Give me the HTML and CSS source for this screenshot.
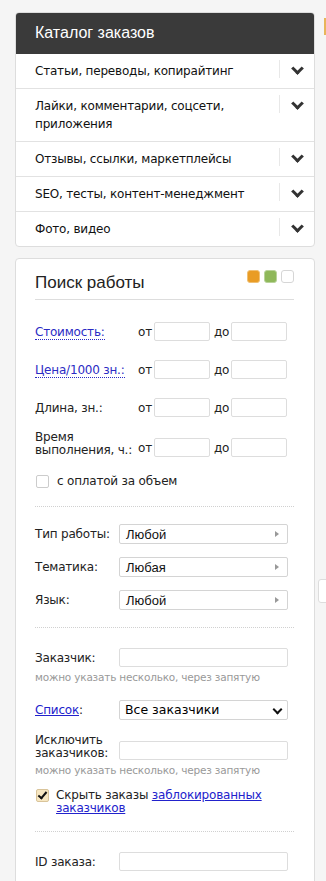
FILE: index.html
```html
<!DOCTYPE html>
<html lang="ru">
<head>
  <meta charset="UTF-8">
  <meta name="viewport" content="width=device-width, initial-scale=1.0">
  <title>Каталог заказов</title>
  <link rel="stylesheet" href="styles.css">
</head>
<body>
  <div class="side-strip"></div>
  <div class="side-tab"></div>

  <div class="sidebar">
    <div class="catalog">
      <div class="catalog-head">Каталог заказов</div>
      <div class="cat-row"><div class="cat-name">Статьи, переводы, копирайтинг</div><div class="cat-toggle"><span class="chev"></span></div></div>
      <div class="cat-row"><div class="cat-name">Лайки, комментарии, соцсети, приложения</div><div class="cat-toggle"><span class="chev"></span></div></div>
      <div class="cat-row"><div class="cat-name">Отзывы, ссылки, маркетплейсы</div><div class="cat-toggle"><span class="chev"></span></div></div>
      <div class="cat-row"><div class="cat-name">SEO, тесты, контент-менеджмент</div><div class="cat-toggle"><span class="chev"></span></div></div>
      <div class="cat-row"><div class="cat-name">Фото, видео</div><div class="cat-toggle"><span class="chev"></span></div></div>
    </div>

    <div class="search">
      <div class="search-head">
        <span class="search-title">Поиск работы</span>
        <span class="swatches">
          <span class="sw sw-orange"></span>
          <span class="sw sw-green"></span>
          <span class="sw sw-white"></span>
        </span>
      </div>

      <div class="range-row">
        <span class="r-label"><a href="#" class="dotted">Стоимость:</a></span>
        <span class="r-from">от</span><input type="text" class="r-input">
        <span class="r-to">до</span><input type="text" class="r-input">
      </div>
      <div class="range-row">
        <span class="r-label"><a href="#" class="dotted">Цена/1000 зн.:</a></span>
        <span class="r-from">от</span><input type="text" class="r-input">
        <span class="r-to">до</span><input type="text" class="r-input">
      </div>
      <div class="range-row">
        <span class="r-label">Длина, зн.:</span>
        <span class="r-from">от</span><input type="text" class="r-input">
        <span class="r-to">до</span><input type="text" class="r-input">
      </div>
      <div class="range-row range-tall">
        <span class="r-label">Время выполнения, ч.:</span>
        <span class="r-from">от</span><input type="text" class="r-input">
        <span class="r-to">до</span><input type="text" class="r-input">
      </div>

      <label class="check-row"><span class="box"></span>с оплатой за объем</label>

      <div class="sep"></div>

      <div class="field-row pick-first">
        <span class="f-label">Тип работы:</span>
        <div class="picker">Любой<span class="tri"></span></div>
      </div>
      <div class="field-row">
        <span class="f-label">Тематика:</span>
        <div class="picker">Любая<span class="tri"></span></div>
      </div>
      <div class="field-row">
        <span class="f-label">Язык:</span>
        <div class="picker">Любой<span class="tri"></span></div>
      </div>

      <div class="sep sep-tight"></div>

      <div class="field-row first">
        <span class="f-label">Заказчик:</span>
        <input type="text" class="f-input">
      </div>
      <div class="hint">можно указать несколько, через запятую</div>

      <div class="field-row list-row">
        <span class="f-label"><a href="#" class="plain">Список</a>:</span>
        <div class="dropdown">Все заказчики<span class="chev small"></span></div>
      </div>

      <div class="field-row tall-row">
        <span class="f-label">Исключить заказчиков:</span>
        <input type="text" class="f-input">
      </div>
      <div class="hint">можно указать несколько, через запятую</div>

      <label class="check-row checked-row"><span class="box checked"></span><span>Скрыть заказы <a href="#" class="plain">заблокированных заказчиков</a></span></label>

      <div class="sep sep-after-check"></div>

      <div class="field-row id-row">
        <span class="f-label">ID заказа:</span>
        <input type="text" class="f-input">
      </div>
    </div>
  </div>
</body>
</html>
```

FILE: styles.css
```css
/* page */
body {
  margin: 0;
  padding: 0;
  background-color: #f5f5f5;
  font-family: Tahoma, "DejaVu Sans", Verdana, sans-serif;
  color: #222;
  overflow: hidden;
}

.sidebar {
  width: 300px;
  padding: 12px 0 0 15px;
}

/* bits of the next column peeking in */
.side-strip {
  position: absolute;
  left: 324px;
  top: 18px;
  width: 2px;
  height: 17px;
  background-color: #e8b55a;
}

.side-tab {
  position: absolute;
  left: 318px;
  top: 579px;
  width: 12px;
  height: 22px;
  border: 1px solid #ddd;
  border-radius: 3px;
  background-color: #fff;
}

/* catalog */
.catalog {
  background-color: #fff;
  border: 1px solid #ddd;
  border-radius: 4px;
  overflow: hidden;
}

.catalog-head {
  background-color: #3a3a3a;
  color: #fff;
  font-family: "Liberation Sans", Arial, sans-serif;
  font-size: 16px;
  height: 41px;
  line-height: 40px;
  padding-left: 19px;
}

.cat-row {
  display: flex;
  border-top: 1px solid #e2e2e2;
}

.cat-row:nth-child(2) {
  border-top: none;
}

.cat-name {
  flex: 1;
  font-size: 12px;
  letter-spacing: -0.2px;
  line-height: 18px;
  padding: 8px 8px 8px 19px;
  color: #111;
}

.cat-toggle {
  width: 34px;
  margin: 6px 0;
  border-left: 1px solid #e8e8e8;
  display: flex;
  justify-content: center;
  padding-top: 4px;
  height: 14px;
}

.chev {
  display: inline-block;
  width: 6px;
  height: 6px;
  border-right: 3px solid #333;
  border-bottom: 3px solid #333;
  transform: rotate(45deg);
}

.chev.small {
  width: 5px;
  height: 5px;
  border-width: 2.5px;
  border-color: #111;
}

/* search */
.search {
  margin-top: 11px;
  background-color: #fff;
  border: 1px solid #ddd;
  border-radius: 4px;
  padding: 0 20px 20px 19px;
  height: 640px;
}

.search-head {
  display: flex;
  justify-content: space-between;
  align-items: center;
  height: 40px;
  border-bottom: 1px solid #ddd;
}

.search-title {
  font-family: "Liberation Sans", Arial, sans-serif;
  font-size: 17px;
  color: #222;
  padding-top: 7px;
}

.swatches {
  display: flex;
  gap: 4px;
  margin-top: -6px;
}

.sw {
  width: 11px;
  height: 11px;
  border-radius: 3px;
  border: 1px solid transparent;
}

.sw-orange { background-color: #e99c25; border-color: #f0c074; }
.sw-green { background-color: #8fb85a; border-color: #b8d39a; }
.sw-white { background-color: #fff; border-color: #d6d6d6; }

a.dotted {
  color: #2b2bc4;
  text-decoration: none;
  border-bottom: 1px dotted #2b2bc4;
}

a.plain {
  color: #2222cc;
  text-decoration: underline;
}

.range-row {
  display: flex;
  align-items: center;
  font-size: 12px;
  letter-spacing: -0.2px;
  margin-top: 22px;
  height: 19px;
}

.range-row + .range-row {
  margin-top: 19px;
}

.range-row.range-tall {
  margin-top: 14px;
  height: 26px;
  align-items: flex-end;
}

.range-tall .r-label {
  line-height: 13px;
}

.range-tall .r-from,
.range-tall .r-to {
  padding-bottom: 2px;
}

.r-label {
  width: 103px;
  flex-shrink: 0;
  color: #222;
}

.r-from {
  width: 16px;
}

.r-to {
  width: 17px;
  padding-left: 4px;
}

.r-input {
  box-sizing: border-box;
  width: 56px;
  height: 19px;
  border: 1px solid #ddd;
  border-radius: 2px;
  margin: 0;
  padding: 0 3px;
}

.check-row {
  display: flex;
  align-items: flex-start;
  gap: 8px;
  font-size: 12px;
  letter-spacing: -0.2px;
  margin-top: 18px;
  line-height: 13px;
  color: #222;
}

.box {
  flex-shrink: 0;
  box-sizing: border-box;
  width: 13px;
  height: 13px;
  border: 1px solid #ccc;
  border-radius: 2px;
  background-color: #fff;
  margin-left: 1px;
  position: relative;
}

.box.checked {
  background-color: #f7e7c2;
  border-color: #d9c49a;
}

.box.checked::after {
  content: "";
  position: absolute;
  left: 3px;
  top: 0;
  width: 3px;
  height: 7px;
  border-right: 2px solid #111;
  border-bottom: 2px solid #111;
  transform: rotate(40deg);
}

.checked-row {
  margin-top: 13px;
  gap: 7px;
}

.sep {
  border-top: 1px dotted #d0d0d0;
  margin-top: 18px;
}

.sep-tight {
  margin-top: 17px;
}

.sep-after-check {
  margin-top: 16px;
}

.field-row {
  display: flex;
  align-items: center;
  font-size: 12px;
  letter-spacing: -0.2px;
  margin-top: 13px;
  color: #222;
}

.field-row.first {
  margin-top: 20px;
}

.field-row.pick-first {
  margin-top: 17px;
}

.field-row.id-row {
  margin-top: 20px;
}

.f-label {
  width: 84px;
  flex-shrink: 0;
}

.picker,
.dropdown {
  box-sizing: border-box;
  width: 169px;
  height: 20px;
  border: 1px solid #d4d4d4;
  border-radius: 2px;
  display: flex;
  align-items: center;
  justify-content: space-between;
  padding: 0 8px 0 6px;
  font-family: "Liberation Sans", Arial, sans-serif;
  font-size: 13px;
  letter-spacing: 0;
  color: #111;
}

.tri {
  width: 0;
  height: 0;
  border-top: 3px solid transparent;
  border-bottom: 3px solid transparent;
  border-left: 4px solid #999;
}

.dropdown {
  padding: 0 6px 2px 5px;
  font-family: Tahoma, "DejaVu Sans", sans-serif;
  font-size: 12.5px;
  color: #000;
}

.f-input {
  box-sizing: border-box;
  width: 169px;
  height: 19px;
  border: 1px solid #ddd;
  border-radius: 2px;
  margin: 0;
}

.hint {
  font-size: 10.5px;
  letter-spacing: -0.2px;
  color: #999;
  margin-top: 4px;
}

.list-row {
  margin-top: 17px;
}

.tall-row {
  margin-top: 14px;
  align-items: flex-end;
}

.tall-row .f-label {
  line-height: 13px;
}
```
